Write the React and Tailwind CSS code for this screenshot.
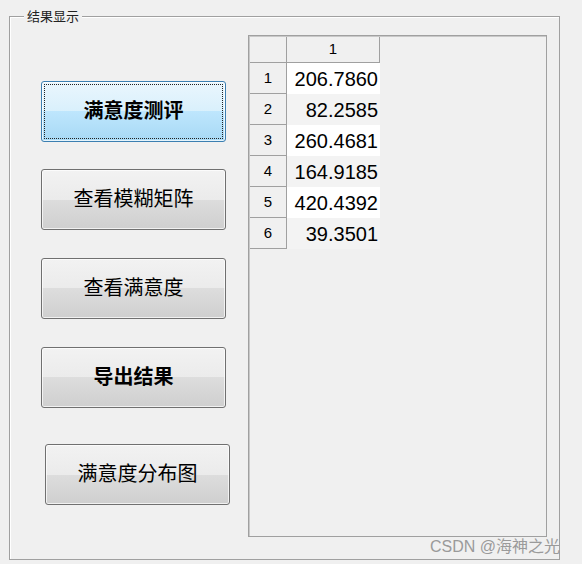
import React from 'react';

const cjk = "font-['Noto_Sans_CJK_SC','Noto_Sans',sans-serif]";
const arial = "font-['Liberation_Sans',Arial,sans-serif]";

const values = ['206.7860', '82.2585', '260.4681', '164.9185', '420.4392', '39.3501'];

function WinButton({ label, bold, focused, className = '' }) {
  const face = focused
    ? 'border-[#3c7fb1] bg-[linear-gradient(#eaf6fd_0%,#d9f0fc_50%,#bee6fd_50%,#a7d9f5_100%)]'
    : 'border-[#707070] bg-[linear-gradient(#f2f2f2_0%,#ebebeb_50%,#dddddd_50%,#cfcfcf_100%)]';
  return (
    <button
      className={`relative w-[185px] h-[61px] rounded-[3px] border ${face} shadow-[inset_0_0_0_1px_rgba(255,255,255,0.7)] flex items-center justify-center ${className}`}
    >
      {focused && <span className="absolute inset-[2px] border border-dotted border-[#222]" />}
      <span className={`${cjk} text-[20px] leading-none text-black ${bold ? 'font-bold' : 'font-normal'} -mt-[3px]`}>{label}</span>
    </button>
  );
}

export default function App() {
  return (
    <div className="relative w-[582px] h-[564px] bg-[#f0f0f0] overflow-hidden pt-[16px] pl-[9px]">
      {/* group panel */}
      <div className="relative w-[551px] h-[544px] border border-[#a0a0a0] shadow-[inset_1px_1px_0_#ffffff] flex">
        <span className={`absolute -top-[10px] left-[14px] px-[3px] bg-[#f0f0f0] ${cjk} text-[13px] leading-[18px] text-[#222]`}>
          结果显示
        </span>

        {/* buttons */}
        <div className="w-[220px] pl-[31px] pt-[64px] flex flex-col shrink-0">
          <WinButton label="满意度测评" bold focused />
          <WinButton label="查看模糊矩阵" className="mt-[27px]" />
          <WinButton label="查看满意度" className="mt-[28px]" />
          <WinButton label="导出结果" bold className="mt-[28px]" />
          <WinButton label="满意度分布图" className="mt-[36px] ml-[4px]" />
        </div>

        {/* table */}
        <div className="mt-[18px] ml-[18px] w-[299px] h-[502px] border border-[#a0a0a0] shadow-[inset_1px_1px_0_#c8c8c8] bg-[#f0f0f0]">
          <div className="flex h-[26px] ml-[1px] mt-[1px]">
            <div className="w-[37px] border-r border-b border-[#a0a0a0]" />
            <div className={`w-[93px] border-r border-b border-[#a0a0a0] flex items-center justify-center ${arial} text-[15px] text-black`}>
              1
            </div>
          </div>
          {values.map((v, i) => (
            <div key={v} className="flex h-[31px] ml-[1px]">
              <div className={`w-[37px] border-r border-b border-[#a0a0a0] flex items-center justify-center ${arial} text-[15px] text-black`}>
                {i + 1}
              </div>
              <div className={`w-[93px] ${i % 2 === 0 ? 'bg-white' : 'bg-[#f3f3f3]'} flex items-center justify-end pr-[2px] ${arial} text-[20px] text-black`}>
                {v}
              </div>
            </div>
          ))}
        </div>
      </div>

      <span className={`absolute left-[430px] top-[535px] ${cjk} text-[16px] leading-[20px] text-[#9a9a9a]`}>
        <span className={arial}>CSDN @</span>海神之光
      </span>
    </div>
  );
}
